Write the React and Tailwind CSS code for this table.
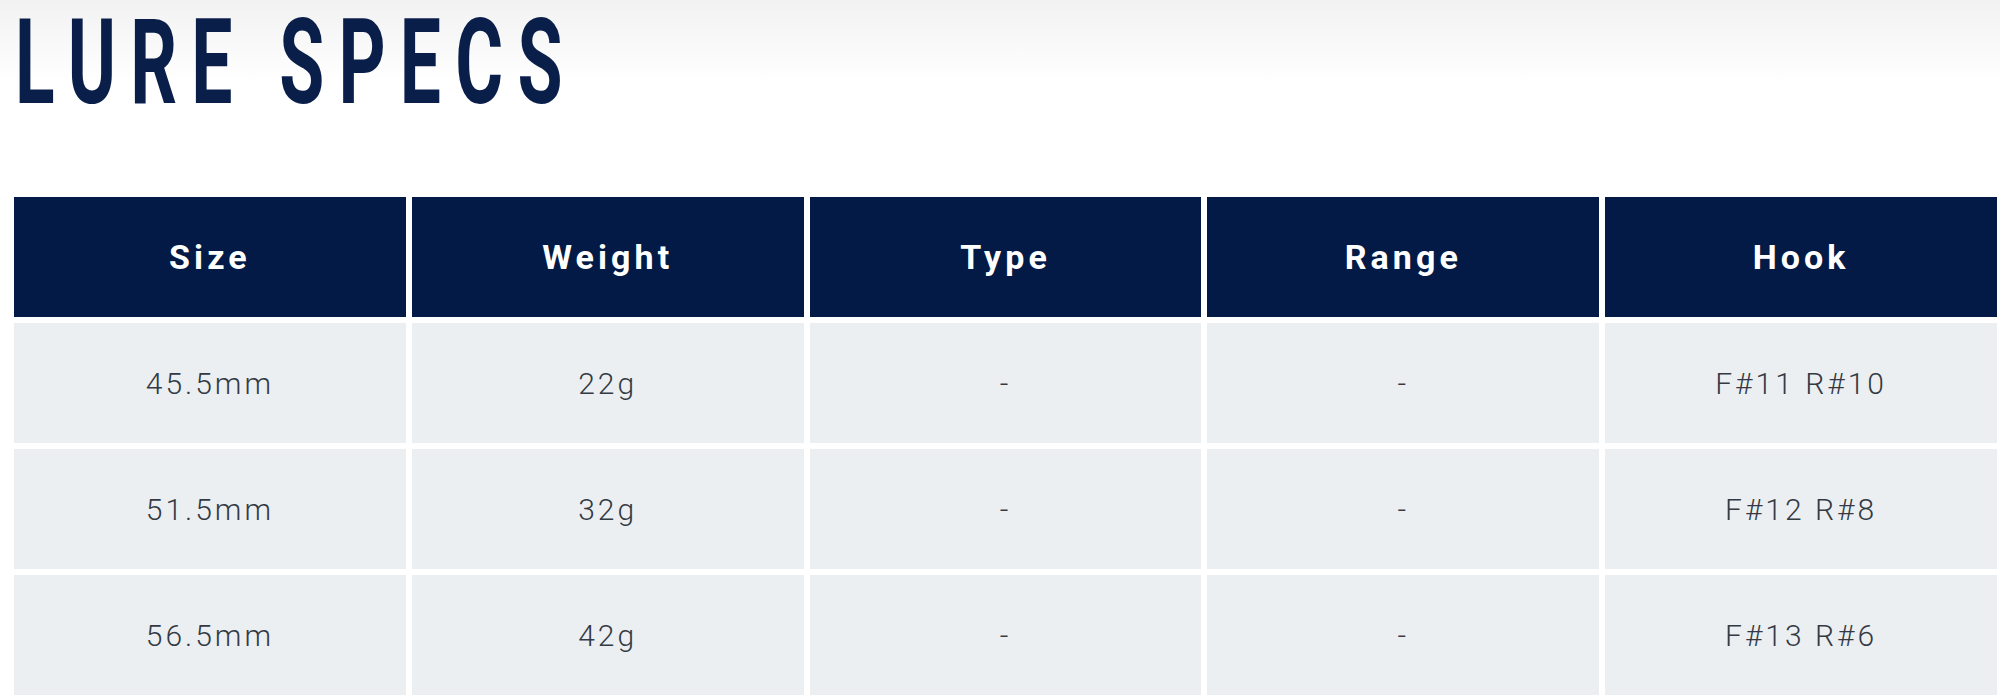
import React from "react";

const specs = [
  { size: "45.5mm", weight: "22g", type: "-", range: "-", hook: "F#11 R#10" },
  { size: "51.5mm", weight: "32g", type: "-", range: "-", hook: "F#12 R#8" },
  { size: "56.5mm", weight: "42g", type: "-", range: "-", hook: "F#13 R#6" },
];

const headers = ["Size", "Weight", "Type", "Range", "Hook"];

const LureSpecs = () => {
  return (
    <div className="w-[2000px] h-[699px] bg-white overflow-hidden">
      <div className="h-[197px] pl-[15px] pt-[4px] bg-linear-to-b from-[#f2f2f2] to-white to-[42%]">
        <h1 className="inline-block origin-left scale-x-[0.62] text-[118px] leading-none font-bold tracking-[0.195em] text-[#0a1e4a] font-['Roboto','Liberation_Sans',sans-serif]">
          LURE SPECS
        </h1>
      </div>

      <div className="ml-[14px] w-[1983px] grid grid-cols-5 gap-[6px] font-['Roboto','Liberation_Sans',sans-serif]">
        {headers.map((h) => (
          <div
            key={h}
            className="h-[120px] flex items-center justify-center bg-[#021a45] text-white text-[34px] font-bold tracking-[0.12em]"
          >
            {h}
          </div>
        ))}
        {specs.map((row) =>
          [row.size, row.weight, row.type, row.range, row.hook].map((v, i) => (
            <div
              key={row.size + i}
              className="h-[120px] flex items-center justify-center bg-[#eceff2] text-[#333a44] text-[30px] font-light tracking-[0.1em]"
            >
              {v}
            </div>
          ))
        )}
      </div>
    </div>
  );
};

export default LureSpecs;
